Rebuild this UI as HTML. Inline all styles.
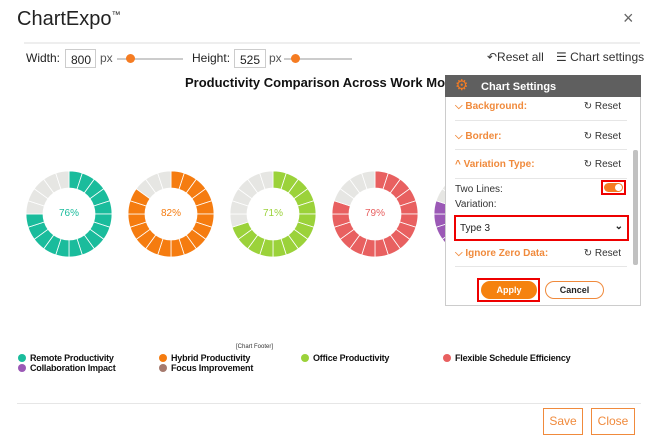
<!DOCTYPE html>
<html><head><meta charset="utf-8"><style>
*{box-sizing:border-box;margin:0;padding:0}
body{width:650px;height:448px;background:#fff;font-family:"Liberation Sans",sans-serif;position:relative;overflow:hidden;color:#222}
.a{position:absolute}
.inp{position:absolute;border:1px solid #ccc;height:18px;font-size:12px;padding:3px 5px;background:#fff}
.sl{position:absolute;height:2px;background:#ccc}
.dot{position:absolute;width:9px;height:9px;border-radius:50%;background:#f57c22}
.lg{position:absolute;font-size:9px;font-weight:bold;color:#111;white-space:nowrap;letter-spacing:-0.2px}
.lg i{display:inline-block;width:8px;height:8px;border-radius:50%;margin-right:4px;vertical-align:-1px}
.row{position:absolute;left:455px;width:172px;font-size:10px;font-weight:bold;color:#f08a3c}
.row span.r{position:absolute;right:6px;color:#333;font-weight:normal}
.hl{position:absolute;left:455px;width:172px;height:1px;background:#e6e6e6}
</style></head><body>
<div class="a" style="left:17px;top:8px;font-size:20px;color:#222">ChartExpo<sup style="font-size:9px">™</sup></div>
<div class="a" style="left:623px;top:8px;font-size:18px;color:#666">×</div>
<div class="a" style="left:24px;top:42px;width:616px;height:2px;background:#eee"></div>
<div class="a" style="left:26px;top:51px;font-size:12px">Width:</div>
<div class="inp" style="left:65px;top:49px;width:31px;height:19px">800</div>
<div class="a" style="left:100px;top:51px;font-size:12px;color:#555">px</div>
<div class="sl" style="left:117px;top:58px;width:66px"></div><div class="dot" style="left:126px;top:54px"></div>
<div class="a" style="left:192px;top:51px;font-size:12px">Height:</div>
<div class="inp" style="left:234px;top:49px;width:32px;height:19px">525</div>
<div class="a" style="left:269px;top:51px;font-size:12px;color:#555">px</div>
<div class="sl" style="left:284px;top:58px;width:68px"></div><div class="dot" style="left:291px;top:54px"></div>
<div class="a" style="left:487px;top:50px;font-size:12px;color:#333">↶Reset all</div>
<div class="a" style="left:556px;top:50px;font-size:12px;color:#333">☰ Chart settings</div>
<div class="a" style="left:185px;top:75px;font-size:13px;font-weight:bold;color:#111">Productivity Comparison Across Work Modes</div>
<svg class="a" style="left:0;top:0" width="650" height="448" id="sv"></svg>
<div class="a" style="left:59px;top:208px;width:20px;text-align:center;font-size:10px;color:#1abc9c">76%</div>
<div class="a" style="left:161px;top:208px;width:20px;text-align:center;font-size:10px;color:#f57c10">82%</div>
<div class="a" style="left:263px;top:208px;width:20px;text-align:center;font-size:10px;color:#9bd23a">71%</div>
<div class="a" style="left:365px;top:208px;width:20px;text-align:center;font-size:10px;color:#e86060">79%</div>
<div class="lg" style="left:18px;top:353px"><i style="background:#1abc9c"></i>Remote Productivity</div>
<div class="lg" style="left:18px;top:363px"><i style="background:#9b59b6"></i>Collaboration Impact</div>
<div class="lg" style="left:159px;top:353px"><i style="background:#f57c10"></i>Hybrid Productivity</div>
<div class="lg" style="left:159px;top:363px"><i style="background:#a57a6e"></i>Focus Improvement</div>
<div class="a" style="left:236px;top:344px;font-size:6px;color:#333">[Chart Footer]</div>
<div class="lg" style="left:301px;top:353px"><i style="background:#9bd23a"></i>Office Productivity</div>
<div class="lg" style="left:443px;top:353px"><i style="background:#e86060"></i>Flexible Schedule Efficiency</div>
<div class="a" style="left:17px;top:403px;width:624px;height:1px;background:#e6e6e6"></div>
<div class="a" style="left:543px;top:408px;width:40px;height:27px;border:1px solid #f08a3c;color:#f08a3c;font-size:12px;text-align:center;line-height:25px">Save</div>
<div class="a" style="left:591px;top:408px;width:44px;height:27px;border:1px solid #f08a3c;color:#f08a3c;font-size:12px;text-align:center;line-height:25px">Close</div>
<div class="a" style="left:445px;top:75px;width:196px;height:231px;background:#fff;border:1px solid #ccc"></div>
<div class="a" style="left:445px;top:75px;width:196px;height:22px;background:#5f5f5f"></div>
<div class="a" style="left:455px;top:78px;color:#f57c22;font-size:15px;line-height:16px">⚙</div>
<div class="a" style="left:481px;top:81px;color:#fff;font-size:11px;font-weight:bold">Chart Settings</div>
<div class="a" style="left:633px;top:150px;width:5px;height:115px;background:#c1c1c1;border-radius:2px"></div>
<div class="row" style="top:101px">⌵ Background:<span class="r">↻ Reset</span></div>
<div class="hl" style="top:120px"></div>
<div class="row" style="top:131px">⌵ Border:<span class="r">↻ Reset</span></div>
<div class="hl" style="top:149px"></div>
<div class="row" style="top:159px">^ Variation Type:<span class="r">↻ Reset</span></div>
<div class="hl" style="top:178px"></div>
<div class="a" style="left:455px;top:184px;font-size:10px;color:#333">Two Lines:</div>
<div class="a" style="left:455px;top:199px;font-size:10px;color:#333">Variation:</div>
<div class="a" style="left:601px;top:180px;width:25px;height:15px;border:2px solid #e00"></div>
<div class="a" style="left:604px;top:183px;width:19px;height:9px;border-radius:5px;background:#f57c22"></div>
<div class="a" style="left:615px;top:184px;width:7px;height:7px;border-radius:50%;background:#fff"></div>
<div class="a" style="left:454px;top:215px;width:175px;height:26px;border:2px solid #e00;font-size:10px;padding:6px 4px">Type 3<span style="position:absolute;right:4px;top:4px;font-weight:bold">⌄</span></div>
<div class="row" style="top:248px">⌵ Ignore Zero Data:<span class="r">↻ Reset</span></div>
<div class="hl" style="top:266px"></div>
<div class="a" style="left:477px;top:278px;width:63px;height:24px;border:2px solid #e00"></div>
<div class="a" style="left:481px;top:281px;width:56px;height:18px;border-radius:9px;background:#f5820f;color:#fff;font-size:9px;font-weight:bold;text-align:center;line-height:18px">Apply</div>
<div class="a" style="left:545px;top:281px;width:59px;height:18px;border-radius:9px;border:1px solid #f08a3c;color:#222;font-size:9px;font-weight:bold;text-align:center;line-height:16px">Cancel</div>
<script>
var sv=document.getElementById('sv'),ns='http://www.w3.org/2000/svg';
var d=[[69,'#1abc9c',.76],[171,'#f57c10',.82],[273,'#9bd23a',.71],[375,'#e86060',.79],[477,'#9b59b6',.78]];
function p(cx,cy,r,a){return [cx+r*Math.sin(a),cy-r*Math.cos(a)]}
d.forEach(function(c){var cx=c[0],cy=214,R=43,r=26,n=20;for(var i=0;i<n;i++){var a0=i/n*2*Math.PI,a1=(i+1)/n*2*Math.PI;var col=(i+1)/n<=c[2]+0.03?c[1]:'#e6e6e3';var A=p(cx,cy,R,a0),B=p(cx,cy,R,a1),C=p(cx,cy,r,a1),D=p(cx,cy,r,a0);var e=document.createElementNS(ns,'path');e.setAttribute('d','M'+A+' A'+R+','+R+' 0 0 1 '+B+' L'+C+' A'+r+','+r+' 0 0 0 '+D+'Z');e.setAttribute('fill',col);e.setAttribute('stroke','#fff');e.setAttribute('stroke-width','0.8');sv.appendChild(e);}});
</script>
</body></html>
